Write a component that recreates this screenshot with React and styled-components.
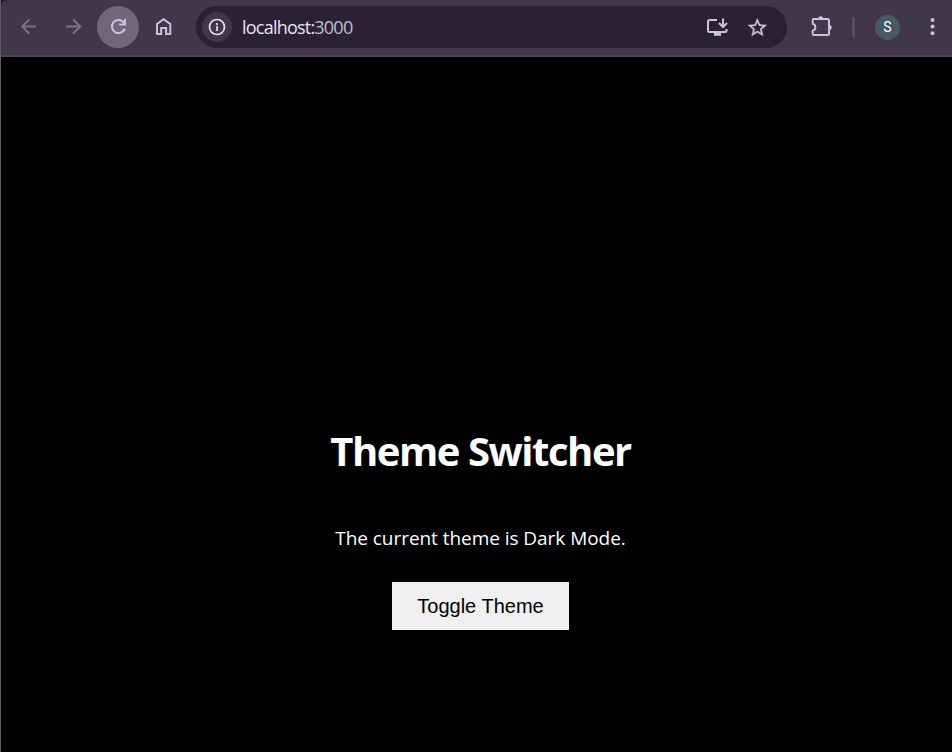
import React, { useState } from "react";
import styled, { createGlobalStyle } from "styled-components";

const GlobalStyle = createGlobalStyle`
  * { box-sizing: border-box; }
  body { margin: 0; background: #000; overflow: hidden; }
`;

const Window = styled.div`
  display: flex;
  flex-direction: column;
  height: 100vh;
  border-left: 1px solid #5c5b5e;
  background: #1f1b2b;
`;

const Toolbar = styled.header`
  display: flex;
  align-items: flex-start;
  flex: none;
  height: 57px;
  padding: 6px 0 0 6px;
  background: #40374b;
  border-bottom: 2px solid #4b494e;
  border-top-left-radius: 6px;
`;

const NavButton = styled.button`
  display: grid;
  place-items: center;
  flex: none;
  width: 42px;
  height: 42px;
  margin-right: ${({ $gap }) => $gap}px;
  padding: 0;
  border: 0;
  border-radius: 50%;
  color: ${({ $muted }) => ($muted ? "#797084" : "#cdc0dd")};
  background: ${({ $active }) => ($active ? "#70687a" : "transparent")};
`;

const Icon = styled.svg`
  display: block;
  fill: none;
  stroke: currentColor;
  stroke-width: ${({ $weight = 2 }) => $weight};
`;

const AddressBar = styled.div`
  display: flex;
  align-items: center;
  flex: none;
  width: 591px;
  height: 42px;
  padding: 0 18px 0 6px;
  border-radius: 21px;
  background: #2a2234;
  color: #cbc5d0;
`;

const SiteInfo = styled.span`
  display: grid;
  place-items: center;
  width: 30px;
  height: 30px;
  border-radius: 50%;
  background: #40374b;
  color: #e5dfea;
`;

const Address = styled.span`
  flex: 1;
  margin-left: 10px;
  font: 18px/24px "Open Sans", "Noto Sans", sans-serif;
  letter-spacing: -0.78px;
  color: #e8e2ec;
`;

const Port = styled.span`
  color: #c3bcc9;
`;

const BarActions = styled.div`
  display: flex;
  align-items: center;
  gap: 16px;
`;

const Extensions = styled.div`
  display: flex;
  align-items: center;
  height: 42px;
  margin-left: 22px;
  color: #cdc0dd;
`;

const Divider = styled.span`
  width: 3px;
  height: 20px;
  margin: 0 20px 0 19px;
  border-radius: 2px;
  background: #574e62;
`;

const Avatar = styled.span`
  display: grid;
  place-items: center;
  width: 25px;
  height: 25px;
  margin-right: 30px;
  border-radius: 50%;
  background: #455a64;
  color: #fff;
  font: 14px/25px Roboto, sans-serif;
`;

const Page = styled.main`
  display: flex;
  flex: 1;
  flex-direction: column;
  align-items: center;
  padding: 367px 0 0 8px;
  background: ${({ $dark }) => ($dark ? "#000" : "#fff")};
  color: ${({ $dark }) => ($dark ? "#fff" : "#000")};
  font-family: "Open Sans", "Noto Sans", sans-serif;
`;

const Title = styled.h1`
  margin: 0;
  font-size: 40px;
  line-height: 54px;
  font-weight: 700;
  letter-spacing: -1.45px;
`;

const Status = styled.p`
  margin: 47px 0 0;
  font-size: 19px;
  line-height: 27px;
  letter-spacing: -0.05px;
  white-space: nowrap;
`;

const ToggleButton = styled.button`
  width: 177px;
  height: 48px;
  margin-top: 30px;
  padding: 0;
  border: 0;
  background: #efefef;
  color: #000;
  font: 20px/23px "Liberation Sans", sans-serif;
`;

function Glyph({ w = 24, h = 24, weight, children }) {
  return (
    <Icon width={w} height={h} viewBox={`0 0 ${w} ${h}`} $weight={weight} aria-hidden="true">
      {children}
    </Icon>
  );
}

export default function App() {
  const [dark, setDark] = useState(true);
  return (
    <>
      <GlobalStyle />
      <Window>
        <Toolbar>
          <NavButton $muted $gap={3} aria-label="Back">
            <Glyph><path d="M20 11.5H6.5M13.2 4.5L6.2 11.5l7 7" /></Glyph>
          </NavButton>
          <NavButton $muted $gap={3} aria-label="Forward">
            <Glyph><path d="M5 11.5H19M12.2 4.5l7 7-7 7" /></Glyph>
          </NavButton>
          <NavButton $active $gap={4} aria-label="Reload">
            <Glyph><path d="M18.8 13.6A6.6 6.6 0 1 1 17.4 7L19 8.8M19 4v5.6h-6" /></Glyph>
          </NavButton>
          <NavButton $gap={11} aria-label="Home">
            <Glyph><path d="M5 19V9L11.7 4.2 18.3 9V19H14.1V13H9.2V19Z" /></Glyph>
          </NavButton>
          <AddressBar>
            <SiteInfo>
              <Glyph w={18} h={18} weight={1.7}>
                <circle cx="9" cy="9" r="7.5" />
                <path d="M9 8v5M9 5v2" />
              </Glyph>
            </SiteInfo>
            <Address>localhost:<Port>3000</Port></Address>
            <BarActions>
              <Glyph>
                <path d="M12 5H4.5Q3 5 3 6.5v9Q3 17 4.5 17H20Q21.5 17 21.5 15.5V14M18 3.5v8.3M14 8l4 4 4-4" />
                <path d="M9 19.2h7" strokeWidth="3.2" />
              </Glyph>
              <Glyph>
                <path
                  transform="translate(1.1 1.3) scale(0.94)"
                  fill="currentColor"
                  strokeWidth="0.3"
                  d="M22 9.24l-7.19-.62L12 2 9.19 8.63 2 9.24l5.46 4.73L5.82 21 12 17.27 18.18 21l-1.63-7.03L22 9.24zM12 15.4l-3.76 2.27 1-4.28-3.32-2.88 4.38-.38L12 6.1l1.71 4.04 4.38.38-3.32 2.88 1 4.28L12 15.4z"
                />
              </Glyph>
            </BarActions>
          </AddressBar>
          <Extensions>
            <Glyph>
              <path d="M4.6 4H18.5Q20 4 20 5.5V18.5Q20 20 18.5 20H4.6Q3.7 20 3.7 19V15.6C7.2 14.8 7.2 9.5 3.7 8.7V5Q3.7 4 4.6 4Z" />
              <path d="M9.2 4A2.4 2.7 0 0 1 14 4ZM20 10A2.7 2.5 0 0 1 20 15Z" fill="currentColor" stroke="none" />
            </Glyph>
            <Divider />
            <Avatar>S</Avatar>
            <Glyph w={5} h={20}>
              <g fill="currentColor" stroke="none">
                <circle cx="2.5" cy="3" r="2" />
                <circle cx="2.5" cy="9.6" r="2" />
                <circle cx="2.5" cy="16.3" r="2" />
              </g>
            </Glyph>
          </Extensions>
        </Toolbar>
        <Page $dark={dark}>
          <Title>Theme Switcher</Title>
          <Status>The current theme is {dark ? "Dark" : "Light"} Mode.</Status>
          <ToggleButton onClick={() => setDark(!dark)}>Toggle Theme</ToggleButton>
        </Page>
      </Window>
    </>
  );
}
